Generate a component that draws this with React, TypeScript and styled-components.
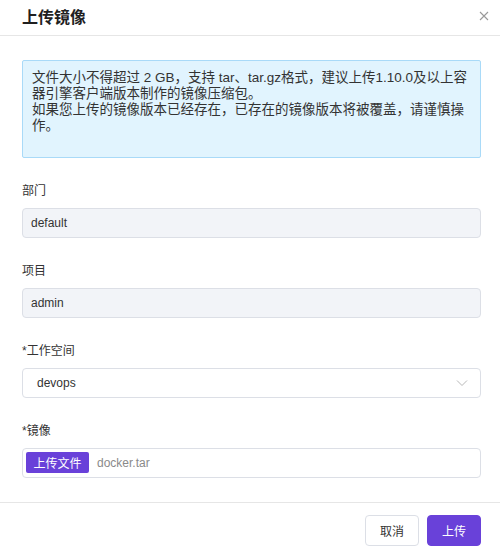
import React from "react";
import styled, { createGlobalStyle } from "styled-components";

const GlobalStyle = createGlobalStyle`
  html, body { margin: 0; padding: 0; background: #ffffff; }
  body { font-family: "Liberation Sans", "Noto Sans CJK SC", sans-serif; color: #333; }
  * { box-sizing: border-box; }
`;

const PURPLE = "#6941d9";

const Dialog = styled.div`
  width: 500px;
  height: 554px;
  background: #fff;
  display: flex;
  flex-direction: column;
`;

const Header = styled.div`
  height: 36px;
  border-bottom: 1px solid #e6e6e6;
  display: flex;
  align-items: center;
  justify-content: space-between;
  padding: 0 10px 2px 22px;
`;

const Title = styled.h2`
  margin: 0;
  font-size: 16px;
  font-weight: 700;
  color: #1f1f1f;
`;

const CloseButton = styled.button`
  border: 0;
  background: transparent;
  padding: 0;
  width: 12px;
  height: 12px;
  display: flex;
  align-items: center;
  justify-content: center;
  cursor: pointer;
`;

const Body = styled.div`
  flex: 1;
  padding: 24px 19px 24px 22px;
  display: flex;
  flex-direction: column;
  gap: 25px;
  border-bottom: 1px solid #e6e6e6;
`;

const Alert = styled.div`
  background: #e1f4fe;
  border: 1px solid #a9daf8;
  border-radius: 2px;
  padding: 9px 6px 23px 9px;
  font-size: 13.5px;
  line-height: 16px;
  color: #333;
`;

const Field = styled.div`
  display: flex;
  flex-direction: column;
  gap: 9px;
`;

const Label = styled.label`
  font-size: 12px;
  line-height: 16px;
  color: #333;
`;

const ReadOnlyInput = styled.div`
  height: 30px;
  border: 1px solid #dcdfe6;
  border-radius: 4px;
  background: #f2f4f8;
  padding: 0 8px;
  display: flex;
  align-items: center;
  font-size: 12px;
  color: #333;
`;

const Select = styled.div`
  height: 30px;
  border: 1px solid #dcdfe6;
  border-radius: 4px;
  background: #fff;
  padding: 0 12px 0 14px;
  display: flex;
  align-items: center;
  justify-content: space-between;
  font-size: 12px;
  color: #333;
`;

const FileInput = styled.div`
  height: 30px;
  border: 1px solid #dcdfe6;
  border-radius: 4px;
  background: #fff;
  padding: 0 3px;
  display: flex;
  align-items: center;
  gap: 8px;
  font-size: 12px;
`;

const FileButton = styled.span`
  height: 21px;
  width: 63px;
  background: ${PURPLE};
  border-radius: 2px;
  color: #fff;
  font-size: 12px;
  display: flex;
  align-items: center;
  justify-content: center;
`;

const FileName = styled.span`
  color: #8a8a8a;
`;

const Footer = styled.div`
  height: 52px;
  padding: 0 19px 8px 0;
  display: flex;
  align-items: flex-end;
  justify-content: flex-end;
  gap: 8px;
`;

const Button = styled.button<{ $primary?: boolean }>`
  width: 54px;
  height: 31px;
  border-radius: 4px;
  font-size: 12px;
  font-family: inherit;
  cursor: pointer;
  border: 1px solid ${(p) => (p.$primary ? PURPLE : "#dcdfe6")};
  background: ${(p) => (p.$primary ? PURPLE : "#fff")};
  color: ${(p) => (p.$primary ? "#fff" : "#333")};
`;

export default function App() {
  return (
    <>
      <GlobalStyle />
      <Dialog>
        <Header>
          <Title>上传镜像</Title>
          <CloseButton aria-label="close">
            <svg width="10" height="10" viewBox="0 0 10 10">
              <path d="M1 1 L9 9 M9 1 L1 9" stroke="#9a9a9a" strokeWidth="1.1" />
            </svg>
          </CloseButton>
        </Header>
        <Body>
          <Alert>
            文件大小不得超过 2 GB，支持 tar、tar.gz格式，建议上传1.10.0及以上容器引擎客户端版本制作的镜像压缩包。
            <br />
            如果您上传的镜像版本已经存在，已存在的镜像版本将被覆盖，请谨慎操作。
          </Alert>
          <Field>
            <Label>部门</Label>
            <ReadOnlyInput>default</ReadOnlyInput>
          </Field>
          <Field>
            <Label>项目</Label>
            <ReadOnlyInput>admin</ReadOnlyInput>
          </Field>
          <Field>
            <Label>*工作空间</Label>
            <Select>
              <span>devops</span>
              <svg width="12" height="8" viewBox="0 0 12 8">
                <path d="M1 1.5 L6 6.5 L11 1.5" fill="none" stroke="#b8b8b8" strokeWidth="1" />
              </svg>
            </Select>
          </Field>
          <Field>
            <Label>*镜像</Label>
            <FileInput>
              <FileButton>上传文件</FileButton>
              <FileName>docker.tar</FileName>
            </FileInput>
          </Field>
        </Body>
        <Footer>
          <Button>取消</Button>
          <Button $primary>上传</Button>
        </Footer>
      </Dialog>
    </>
  );
}
